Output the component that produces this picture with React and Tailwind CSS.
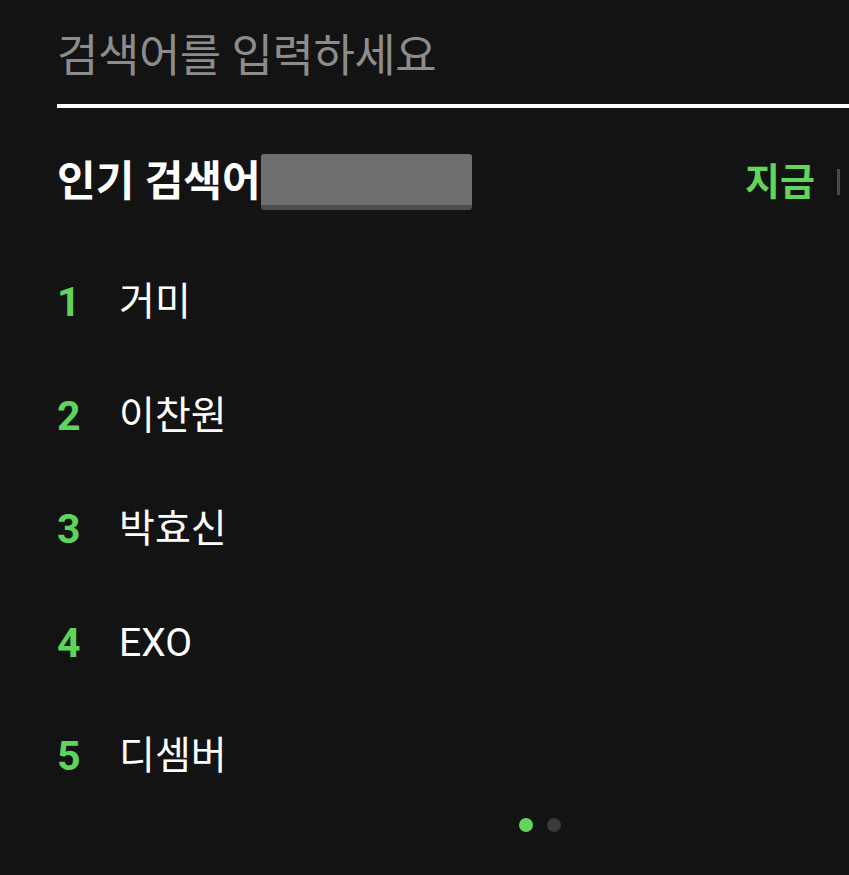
import React from 'react';

const items = ['거미', '이찬원', '박효신', 'EXO', '디셈버'];

export default function App() {
  return (
    <div
      className="w-[849px] h-[875px] bg-[#131313] overflow-hidden flex flex-col"
      style={{ fontFamily: 'Roboto, "Noto Sans CJK KR", sans-serif' }}
    >
      {/* search field */}
      <div className="pl-[57px] pt-[28px]">
        <div className="h-[56px] flex items-center text-[45px] tracking-[-0.01em] text-[#8c8c8c] leading-none">
          검색어를 입력하세요
        </div>
        <div className="mt-[20px] h-[4px] bg-white" />
      </div>

      {/* header */}
      <div className="pl-[57px] pr-[9px] mt-[46px] h-[56px] flex items-center">
        <div className="flex items-center flex-1">
          <span className="text-[42px] font-bold text-white leading-none">인기 검색어</span>
          <div className="w-[211px] h-[56px] rounded-[3px] bg-[#6e6e6e] border-b-[5px] border-[#4b4c58]" />
        </div>
        <span className="text-[38px] font-bold text-[#62d65a] leading-none">지금</span>
        <div className="ml-[22px] w-[3px] h-[26px] bg-[#4a4a4a]" />
      </div>

      {/* list */}
      <ul className="pl-[57px] mt-[36px] flex flex-col">
        {items.map((name, i) => (
          <li key={name} className="h-[113.5px] flex items-center">
            <span className="w-[62px] text-[41px] font-bold text-[#5fd45b] leading-none">{i + 1}</span>
            <span className="text-[39px] text-white leading-none">{name}</span>
          </li>
        ))}
      </ul>

      {/* pager */}
      <div className="mt-[4px] flex justify-center gap-[14px] pl-[231px]">
        <span className="w-[14px] h-[14px] rounded-full bg-[#62d65a]" />
        <span className="w-[14px] h-[14px] rounded-full bg-[#3a3a3a]" />
      </div>
    </div>
  );
}
